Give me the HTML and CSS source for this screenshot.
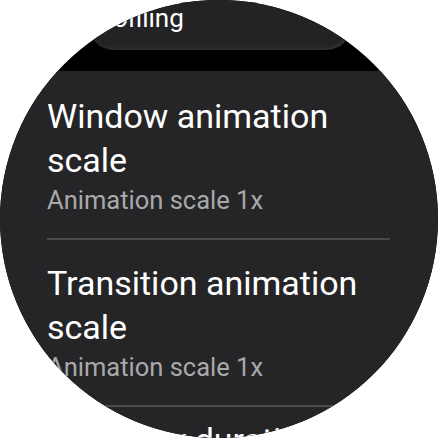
FILE: index.html
```html
<!DOCTYPE html>
<html lang="en">
<head>
    <meta charset="UTF-8">
    <meta name="viewport" content="width=device-width, initial-scale=1.0">
    <title>Developer options</title>
    <link rel="stylesheet" href="styles.css">
</head>
<body>
    <div class="watch">
        <div class="top-chip">
            <span class="chip-label">Profiling</span>
        </div>
        <div class="list-card">
            <div class="item">
                <div class="item-title">Window animation scale</div>
                <div class="item-value">Animation scale 1x</div>
            </div>
            <div class="divider"></div>
            <div class="item">
                <div class="item-title">Transition animation scale</div>
                <div class="item-value">Animation scale 1x</div>
            </div>
            <div class="divider"></div>
            <div class="item item-last">
                <div class="item-title">Animator duration scale</div>
                <div class="item-value">Animation scale 1x</div>
            </div>
        </div>
    </div>
</body>
</html>
```

FILE: styles.css
```css
body {
    margin: 0;
    background-color: #fff;
    font-family: Roboto, "Noto Sans", sans-serif;
}
.watch {
    width: 438px;
    height: 438px;
    border-radius: 50%;
    overflow: hidden;
    background-color: #000;
    display: flex;
    flex-direction: column;
}
.top-chip {
    flex-shrink: 0;
    height: 80px;
    margin: -30px 86px 0 88px;
    padding: 0 24px 0 0;
    background-color: #232325;
    border-radius: 0 0 26px 26px;
    box-shadow: inset -2px -2px 3px rgba(255, 255, 255, 0.06);
    display: flex;
    align-items: flex-end;
    box-sizing: border-box;
}
.chip-label {
    color: #fff;
    font-size: 26px;
    line-height: 32px;
    margin-bottom: 16px;
}
.list-card {
    flex-shrink: 0;
    margin-top: 21px;
    padding: 23px 48px 0 47px;
    background-color: #252527;
    border-radius: 26px 26px 0 0;
}
.item-title {
    color: #fff;
    font-size: 34px;
    line-height: 44px;
}
.item-value {
    color: #a9a9ab;
    font-size: 25.5px;
    line-height: 32px;
    margin-top: 2px;
}
.item {
    padding-bottom: 22px;
}
.item-last {
    margin-top: -10px;
}
.divider {
    height: 2px;
    background-color: #4a4a4c;
    margin-bottom: 21px;
}
```
